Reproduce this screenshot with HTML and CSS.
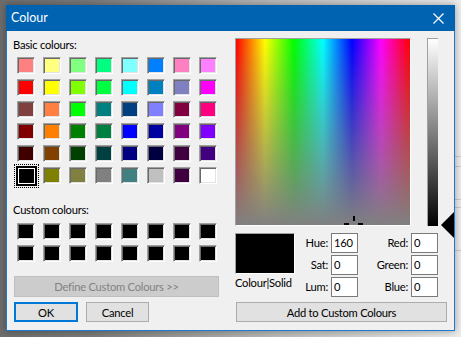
FILE: index.html
```html
<!DOCTYPE html>
<html>
<head>
<meta charset="utf-8">
<link rel="stylesheet" href="styles.css">
</head>
<body>
<div class="dialog">
  <div class="titlebar">
    <span class="title">Colour</span>
    <svg class="close" width="11" height="11" viewBox="0 0 11 11"><path d="M0.5 0.5 L10.5 10.5 M10.5 0.5 L0.5 10.5" stroke="#fff" stroke-width="1.2" fill="none"/></svg>
  </div>
  <div class="content">
    <div class="left">
      <div class="label">Basic colours:</div>
      <div class="swatches basic">
        <span class="sw" style="background:#ff8080"></span><span class="sw" style="background:#ffff80"></span><span class="sw" style="background:#80ff80"></span><span class="sw" style="background:#00ff80"></span><span class="sw" style="background:#80ffff"></span><span class="sw" style="background:#0080ff"></span><span class="sw" style="background:#ff80c0"></span><span class="sw" style="background:#ff80ff"></span>
        <span class="sw" style="background:#ff0000"></span><span class="sw" style="background:#ffff00"></span><span class="sw" style="background:#80ff00"></span><span class="sw" style="background:#00ff40"></span><span class="sw" style="background:#00ffff"></span><span class="sw" style="background:#0080c0"></span><span class="sw" style="background:#8080c0"></span><span class="sw" style="background:#ff00ff"></span>
        <span class="sw" style="background:#804040"></span><span class="sw" style="background:#ff8040"></span><span class="sw" style="background:#00ff00"></span><span class="sw" style="background:#008080"></span><span class="sw" style="background:#004080"></span><span class="sw" style="background:#8080ff"></span><span class="sw" style="background:#800040"></span><span class="sw" style="background:#ff0080"></span>
        <span class="sw" style="background:#800000"></span><span class="sw" style="background:#ff8000"></span><span class="sw" style="background:#008000"></span><span class="sw" style="background:#008040"></span><span class="sw" style="background:#0000ff"></span><span class="sw" style="background:#0000a0"></span><span class="sw" style="background:#800080"></span><span class="sw" style="background:#8000ff"></span>
        <span class="sw" style="background:#400000"></span><span class="sw" style="background:#804000"></span><span class="sw" style="background:#004000"></span><span class="sw" style="background:#004040"></span><span class="sw" style="background:#000080"></span><span class="sw" style="background:#000040"></span><span class="sw" style="background:#400040"></span><span class="sw" style="background:#400080"></span>
        <span class="sw sel" style="background:#000000"></span><span class="sw" style="background:#808000"></span><span class="sw" style="background:#808040"></span><span class="sw" style="background:#808080"></span><span class="sw" style="background:#408080"></span><span class="sw" style="background:#c0c0c0"></span><span class="sw" style="background:#400040"></span><span class="sw" style="background:#ffffff"></span>
      </div>
      <div class="label custom-label">Custom colours:</div>
      <div class="swatches custom">
        <span class="sw"></span><span class="sw"></span><span class="sw"></span><span class="sw"></span><span class="sw"></span><span class="sw"></span><span class="sw"></span><span class="sw"></span>
        <span class="sw"></span><span class="sw"></span><span class="sw"></span><span class="sw"></span><span class="sw"></span><span class="sw"></span><span class="sw"></span><span class="sw"></span>
      </div>
      <div class="btn define">Define Custom Colours &gt;&gt;</div>
      <div class="btnrow">
        <div class="btn ok">OK</div>
        <div class="btn cancel">Cancel</div>
      </div>
    </div>
    <div class="right">
      <div class="picker">
        <div class="spectrum">
          <i class="ch ch-v"></i><i class="ch ch-l"></i><i class="ch ch-r"></i>
        </div>
        <div class="lum"></div>
        <div class="arrow"></div>
      </div>
      <div class="lower">
        <div class="preview-col">
          <div class="preview"></div>
          <div class="plabel">Colour|Solid</div>
        </div>
        <div class="fields">
          <span class="flabel">Hue:</span><span class="field">160</span><span class="flabel">Red:</span><span class="field">0</span>
          <span class="flabel">Sat:</span><span class="field">0</span><span class="flabel">Green:</span><span class="field">0</span>
          <span class="flabel">Lum:</span><span class="field">0</span><span class="flabel">Blue:</span><span class="field">0</span>
        </div>
      </div>
      <div class="btn add">Add to Custom Colours</div>
    </div>
  </div>
</div>
</body>
</html>
```

FILE: styles.css
```css
html, body {
  margin: 0;
  padding: 0;
}
body {
  width: 461px;
  height: 337px;
  overflow: hidden;
  font-family: Lato, "Liberation Sans", sans-serif;
  font-size: 11.2px;
  letter-spacing: -0.25px;
  color: #000;
  background:
    linear-gradient(#c9c9c9, #c9c9c9) right 0 top 156px / 6px 1px no-repeat,
    linear-gradient(#c9c9c9, #c9c9c9) right 0 top 166px / 6px 1px no-repeat,
    linear-gradient(#c9c9c9, #c9c9c9) right 0 top 199px / 6px 1px no-repeat,
    linear-gradient(#c9c9c9, #c9c9c9) right 0 top 207px / 6px 1px no-repeat,
    linear-gradient(#c9c9c9, #c9c9c9) right 0 top 250px / 6px 1px no-repeat,
    linear-gradient(to right, #6c6c6c 0, #7a7a7a 20%, #b9b9b9 60%, #e6e6e6 97%, #ececec 100%);
}
.dialog {
  margin: 5px 0 0 6px;
  width: 449px;
  height: 326px;
  box-sizing: border-box;
  border: 1px solid #1b7ccd;
  border-top: 0;
  background: #f0f0f0;
  box-shadow: 0 0 7px rgba(0, 0, 0, 0.35);
  display: flex;
  flex-direction: column;
}
.titlebar {
  height: 26px;
  flex: none;
  background: #0063b1;
  color: #fff;
  display: flex;
  align-items: center;
  margin: 0 -1px 0 -1px;
  padding-left: 5px;
  padding-right: 11px;
}
.title {
  font-size: 12.5px;
  letter-spacing: 0;
  line-height: 16px;
}
.close {
  margin-left: auto;
  display: block;
}
.content {
  display: flex;
  padding: 6px 0 0 6px;
}
.left {
  width: 206px;
  display: flex;
  flex-direction: column;
}
.label {
  line-height: 15px;
  height: 15px;
  white-space: nowrap;
}
.swatches {
  display: grid;
  grid-template-columns: repeat(8, 18px);
  grid-auto-rows: 17px;
  column-gap: 8px;
  row-gap: 5px;
  margin-left: 4px;
}
.basic {
  margin-top: 5px;
}
.custom-label {
  margin-top: 18px;
}
.custom {
  margin-top: 6px;
}
.sw {
  display: block;
  box-sizing: border-box;
  background: #000;
  border: 1px solid;
  border-color: #a0a0a0 #ffffff #ffffff #a0a0a0;
  box-shadow: inset 1px 1px 0 #696969, inset -1px -1px 0 #e3e3e3;
}
.sw.sel {
  margin: -1px -2px -2px -1px;
  border: 2px solid #000;
  box-shadow: inset 0 0 0 1px #fff;
  outline: 1px dotted #000;
  outline-offset: 1px;
}
.btn {
  box-sizing: border-box;
  display: flex;
  align-items: center;
  justify-content: center;
  background: #e1e1e1;
  border: 1px solid #adadad;
  white-space: nowrap;
}
.define {
  margin-top: 14px;
  margin-left: 1px;
  width: 205px;
  height: 21px;
  background: #cccccc;
  border-color: #bfbfbf;
  color: #838383;
}
.btnrow {
  display: flex;
  margin-top: 5px;
  margin-left: 1px;
  gap: 8px;
}
.ok {
  width: 64px;
  height: 20px;
  border: 2px solid #0078d7;
}
.cancel {
  width: 63px;
  height: 20px;
}
.right {
  width: 212px;
  margin-left: 16px;
  padding-top: 1px;
  display: flex;
  flex-direction: column;
}
.picker {
  position: relative;
  display: flex;
  gap: 16px;
  height: 188px;
}
.spectrum {
  position: relative;
  overflow: hidden;
  width: 176px;
  height: 188px;
  box-sizing: border-box;
  border: 1px solid;
  border-color: #a0a0a0 #ffffff #ffffff #a0a0a0;
  background:
    linear-gradient(to bottom, rgba(128, 128, 128, 0), #808080),
    linear-gradient(to right, #ff0000, #ffff00, #00ff00, #00ffff, #0000ff, #ff00ff, #ff0000);
}
.ch {
  position: absolute;
  background: #000;
}
.ch-v {
  left: 117px;
  top: 177px;
  width: 2px;
  height: 5px;
}
.ch-l {
  left: 108px;
  top: 184px;
  width: 5px;
  height: 3px;
}
.ch-r {
  left: 122px;
  top: 184px;
  width: 5px;
  height: 3px;
}
.lum {
  width: 11px;
  height: 188px;
  box-sizing: border-box;
  border-left: 1px solid #a0a0a0;
  border-top: 1px solid #a0a0a0;
  background: linear-gradient(#ffffff, #000000);
}
.arrow {
  position: absolute;
  left: 206px;
  top: 174px;
  width: 13px;
  height: 26px;
  background: #000;
  clip-path: polygon(0 50%, 100% 0, 100% 100%);
}
.lower {
  display: flex;
  margin-top: 7px;
}
.preview-col {
  width: 60px;
}
.preview {
  width: 60px;
  height: 41px;
  box-sizing: border-box;
  background: #000;
  border: 1px solid;
  border-color: #a0a0a0 #ffffff #ffffff #a0a0a0;
}
.plabel {
  margin-top: 1px;
  line-height: 15px;
  white-space: nowrap;
}
.fields {
  display: grid;
  grid-template-columns: 36px 27px 53px 27px;
  grid-auto-rows: 20px;
  row-gap: 2px;
}
.flabel {
  text-align: right;
  padding-right: 3px;
  line-height: 20px;
}
.field {
  box-sizing: border-box;
  border: 1px solid #7a7a7a;
  background: #fff;
  padding-left: 2px;
  line-height: 18px;
}
.add {
  margin-top: 5px;
  margin-left: 1px;
  width: 211px;
  height: 20px;
}
```
